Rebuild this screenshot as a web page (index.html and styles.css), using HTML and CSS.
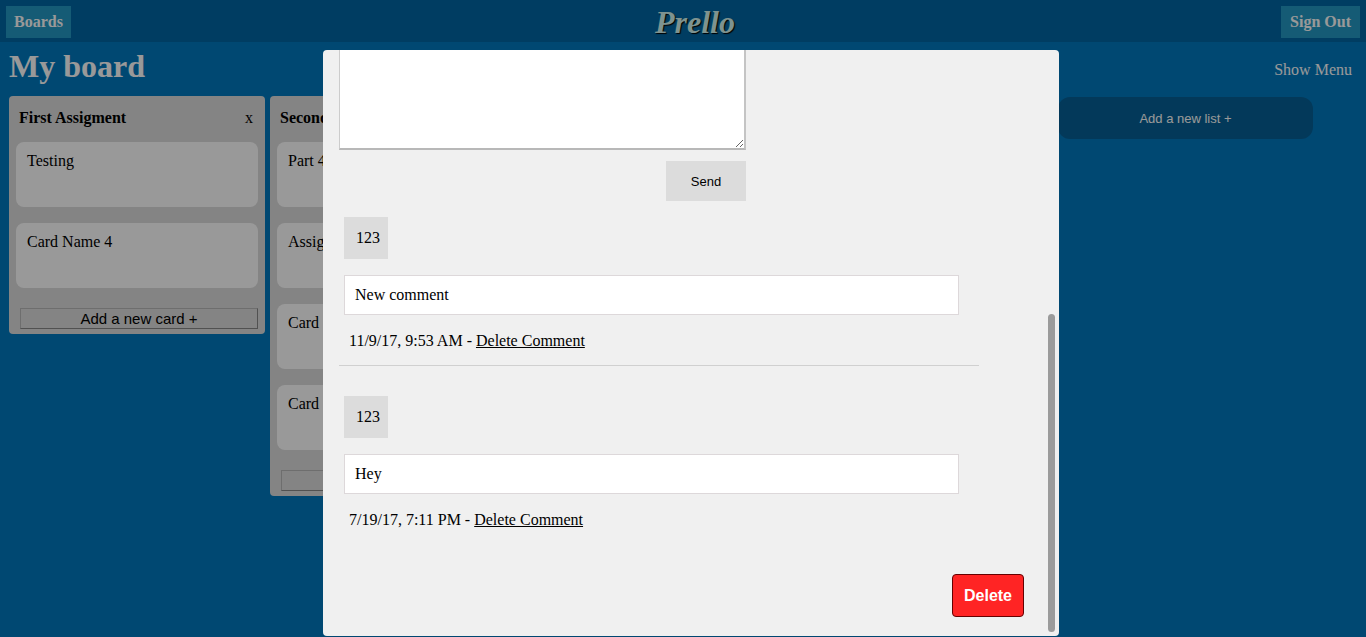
FILE: index.html
```html
<!DOCTYPE html>
<html lang="en">
<head>
<meta charset="utf-8">
<title>Prello</title>
<meta name="viewport" content="width=device-width, initial-scale=1">
<link rel="stylesheet" href="styles.css">
</head>
<body>
<header class="topbar">
  <a class="nav-button nav-start" href="#">Boards</a>
  <a class="logo" href="#">Prello</a>
  <a class="nav-button nav-end" href="#">Sign Out</a>
</header>
<main class="board">
  <div class="board-head">
    <h1 class="board-title">My board</h1>
    <a class="menu-link" href="#">Show Menu</a>
  </div>
  <div class="lists">
    <section class="list">
      <div class="list-head"><h2 class="list-title">First Assigment</h2><button class="list-close">x</button></div>
      <div class="cards">
        <article class="card">Testing</article>
        <article class="card">Card Name 4</article>
      </div>
      <button class="add-card">Add a new card +</button>
    </section>
    <section class="list">
      <div class="list-head"><h2 class="list-title">Second</h2></div>
      <div class="cards">
        <article class="card">Part 4</article>
        <article class="card">Assig</article>
        <article class="card">Card</article>
        <article class="card">Card</article>
      </div>
      <button class="add-card" aria-label="Add card"></button>
    </section>
    <section class="list"></section>
    <section class="list"></section>
    <button class="add-list">Add a new list +</button>
  </div>
</main>
<div class="overlay">
  <div class="modal" role="dialog" aria-modal="true">
    <form class="comment-form">
      <textarea class="comment-input" aria-label="Comment"></textarea>
      <button class="send" type="button">Send</button>
    </form>
    <div class="comments">
      <article class="comment">
        <span class="author">123</span>
        <p class="comment-text">New comment</p>
        <p class="comment-meta">11/9/17, 9:53 AM - <a class="comment-delete" href="#">Delete Comment</a></p>
      </article>
      <article class="comment">
        <span class="author">123</span>
        <p class="comment-text">Hey</p>
        <p class="comment-meta">7/19/17, 7:11 PM - <a class="comment-delete" href="#">Delete Comment</a></p>
      </article>
    </div>
    <button class="delete-card">Delete</button>
    <div class="scroll-thumb"></div>
  </div>
</div>
</body>
</html>
```
FILE: styles.css
```css
* { box-sizing: border-box; }
body {
  margin: 0;
  min-height: 100vh;
  overflow: hidden;
  background: #0079bf;
  font: 16px/20px "Liberation Serif", "Times New Roman", serif;
  color: #000;
}
h1, h2, p { margin: 0; }
button { font-family: "Liberation Sans", Arial, sans-serif; }
.topbar {
  display: grid;
  grid-template-columns: 1fr auto 1fr;
  align-items: center;
  height: 42px;
  padding: 2px 6px 0;
  background: #0067a3;
}
.nav-button {
  height: 32px;
  padding: 0 8px;
  background: #2398c3;
  color: #fff;
  font-weight: bold;
  line-height: 32px;
  text-decoration: none;
}
.nav-start { justify-self: start; }
.nav-end { justify-self: end; padding: 0 9px; }
.logo {
  padding-left: 24px;
  color: #d2f5f0;
  font-size: 32px;
  font-style: italic;
  font-weight: bold;
  line-height: 36px;
  text-decoration: none;
  text-shadow: 1px 1px 1px #000;
}
.board { padding: 0 9px; }
.board-head {
  display: flex;
  justify-content: space-between;
  height: 54px;
  padding: 6px 5px 0 0;
  color: #fff;
}
.board-title { font-size: 32px; line-height: 36px; }
.menu-link { padding-top: 12px; color: #fff; text-decoration: none; }
.lists { display: flex; align-items: flex-start; gap: 5px; }
.list {
  flex: 0 0 256px;
  padding: 12px 7px 5px;
  border-radius: 4px;
  background: #dcdcdc;
}
.list-head { display: flex; justify-content: space-between; padding: 0 5px 14px 3px; }
.list-title { font-size: 16px; line-height: 20px; }
.list-close {
  padding: 0;
  border: 0;
  background: none;
  font: 16px/20px "Liberation Serif", serif;
}
.cards { display: grid; gap: 16px; }
.card {
  height: 65px;
  padding: 9px 11px;
  border-radius: 8px;
  background: #fff;
}
.add-card {
  display: block;
  width: calc(100% - 4px);
  height: 21px;
  margin: 20px 0 0 4px;
  padding: 0;
  border: 1px solid;
  border-color: #b8b8b8 #888 #888 #b8b8b8;
  background: #dcdcdc;
  font-size: 15px;
  line-height: 19px;
}
.add-list {
  flex: 0 0 255px;
  height: 42px;
  margin: 1px 0 0 5px;
  border: 0;
  border-radius: 12px;
  background: #066096;
  color: #fff;
  font-size: 13px;
}
.overlay {
  position: fixed;
  inset: 0;
  display: flex;
  justify-content: center;
  padding: 50px 0 1px 16px;
  background: rgba(0, 0, 0, 0.4);
}
.modal {
  position: relative;
  display: flex;
  flex-direction: column;
  justify-content: flex-end;
  width: 100%;
  max-width: 736px;
  padding: 0 80px 19px 16px;
  border-radius: 4px;
  overflow: hidden;
  background: #f0f0f0;
}
.modal > * { flex-shrink: 0; }
.comment-form {
  display: flex;
  flex-direction: column;
  align-items: flex-end;
  gap: 11px;
  width: 407px;
  margin-bottom: 16px;
}
.comment-input {
  width: 100%;
  height: 130px;
  border: 1px solid #ccc;
  border-bottom: 2px solid #b8b8b8;
  border-right: 2px solid #c4c4c4;
  resize: both;
}
.send {
  width: 80px;
  height: 40px;
  border: 0;
  background: #dcdcdc;
  font-size: 13px;
}
.comment { padding: 0 5px; }
.comment + .comment {
  position: relative;
  margin-top: 14px;
  padding-top: 31px;
}
.comment + .comment::before {
  content: "";
  position: absolute;
  inset: 0 0 auto;
  height: 1px;
  background: #d0d0d0;
}
.author {
  display: block;
  width: max-content;
  height: 42px;
  padding: 0 8px 0 12px;
  background: #dcdcdc;
  line-height: 42px;
}
.comment-text {
  height: 40px;
  margin: 16px 15px 16px 0;
  padding: 9px 10px;
  border: 1px solid #ddd8da;
  background: #fff;
}
.comment-meta { padding-left: 5px; }
.comment-delete { color: #000; }
.delete-card {
  align-self: flex-end;
  width: 72px;
  height: 43px;
  margin: 44px -45px 0 0;
  padding: 0;
  border: 1px solid #600;
  border-radius: 4px;
  background: #ff2424;
  color: #fff;
  font-size: 16px;
  font-weight: bold;
}
.scroll-thumb {
  position: absolute;
  right: 4px;
  bottom: 4px;
  width: 7px;
  height: 318px;
  border-radius: 4px;
  background: #9b9b9b;
}
```
